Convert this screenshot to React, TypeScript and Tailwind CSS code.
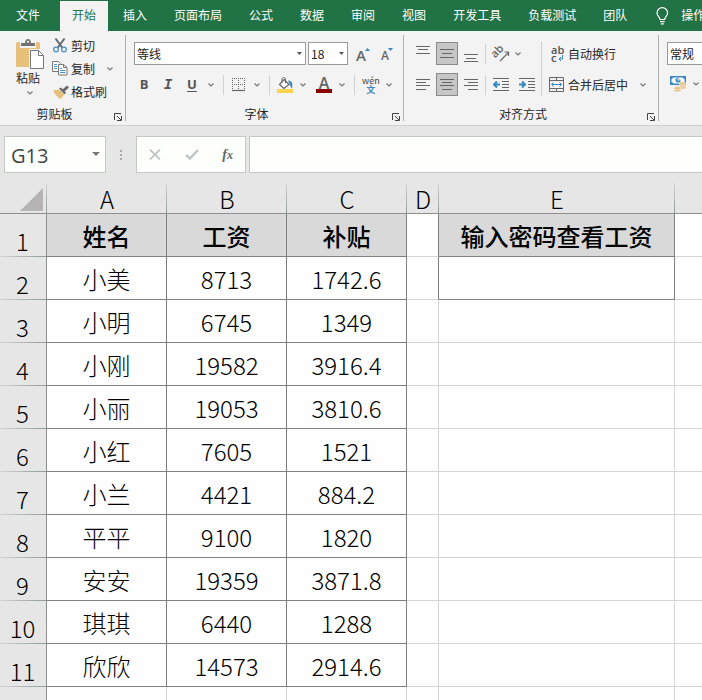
import React from 'react';
import clsx from 'clsx';

const tabs = ['插入', '页面布局', '公式', '数据', '审阅', '视图', '开发工具', '负载测试', '团队'];

const people = [
  { name: '小美', salary: '8713', bonus: '1742.6' },
  { name: '小明', salary: '6745', bonus: '1349' },
  { name: '小刚', salary: '19582', bonus: '3916.4' },
  { name: '小丽', salary: '19053', bonus: '3810.6' },
  { name: '小红', salary: '7605', bonus: '1521' },
  { name: '小兰', salary: '4421', bonus: '884.2' },
  { name: '平平', salary: '9100', bonus: '1820' },
  { name: '安安', salary: '19359', bonus: '3871.8' },
  { name: '琪琪', salary: '6440', bonus: '1288' },
  { name: '欣欣', salary: '14573', bonus: '2914.6' },
];

const rows = [
  ['姓名', '工资', '补贴', '', '输入密码查看工资', ''],
  ...people.map((p) => [p.name, p.salary, p.bonus, '', '', '']),
  ['', '', '', '', '', ''],
];

function Chevron({ className }: { className?: string }) {
  return (
    <svg className={clsx('shrink-0', className)} width="6" height="4" viewBox="0 0 6 4" fill="none" stroke="#777" strokeWidth="1.2">
      <path d="M.5.5 3 3 5.5.5" />
    </svg>
  );
}

function Launcher() {
  return (
    <button aria-label="更多选项" className="absolute right-[3px] bottom-0">
      <svg width="8" height="8" viewBox="0 0 8 8" fill="none" stroke="#444">
        <path d="M.5 7V.5H7M3 3l4 4M7.500 3v4.500H3" />
      </svg>
    </button>
  );
}

function Divider({ className }: { className?: string }) {
  return <div className={clsx('w-px shrink-0 bg-[#d0d0d0]', className)} />;
}

function Group({ label, className, children }: { label: string; className?: string; children: React.ReactNode }) {
  return (
    <section className={clsx('relative flex shrink-0 flex-col justify-between border-r border-[#b0b0b0] pt-[7px]', className)}>
      {children}
      <div className="pr-4 pb-px text-center leading-3">{label}</div>
      <Launcher />
    </section>
  );
}

// three or four horizontal strokes, each given as [x1, x2, y]
function Lines({ lines }: { lines: number[][] }) {
  return (
    <svg width="22" height="22" viewBox="0 0 22 22" className="shrink-0" stroke="#666">
      {lines.map(([x1, x2, y], i) => (
        <path key={i} d={`M${x1} ${y}.5H${x2}`} />
      ))}
    </svg>
  );
}

function LinesButton({ label, lines, active }: { label: string; lines: number[][]; active?: boolean }) {
  return (
    <button
      aria-label={label}
      className={clsx('flex h-[23px] w-[22px] items-center justify-center', active && 'border border-[#8a8a8a] bg-[#c6c6c6]')}
    >
      <Lines lines={lines} />
    </button>
  );
}

function DropSelect({ label, value, className }: { label: string; value: string; className: string }) {
  return (
    <div className={clsx('relative shrink-0', className)}>
      <select aria-label={label} className="h-[23px] w-full appearance-none border border-[#999] bg-white px-[2px] text-xs text-[#222]">
        <option>{value}</option>
      </select>
      <svg className="pointer-events-none absolute top-[10px] right-[4px]" width="5" height="3" viewBox="0 0 5 3">
        <path d="M0 0h5L2.5 3z" fill="#555" />
      </svg>
    </div>
  );
}

function PasteIcon() {
  return (
    <svg width="28" height="30" viewBox="0 0 28 30">
      <rect y="3" width="24" height="25" rx="1.5" fill="#e8c07c" />
      <path d="M4 2.500h4.500a3.500 3.500 0 0 1 7 0H20V9H4z" fill="#f3f3f3" />
      <path d="M5 4h4c0-2 1-4 3-4s3 2 3 4h4v3H5z" fill="#737373" />
      <circle cx="12" cy="2.800" r="1.100" fill="#f3f3f3" />
      <path d="M13 10h11l4 5v15H13z" fill="#f3f3f3" />
      <path d="M14.500 11.500h8l5 5v13h-13z" fill="#fff" stroke="#777" />
      <path d="M22.500 11.500v5h5" fill="none" stroke="#777" />
    </svg>
  );
}

function CutIcon() {
  return (
    <svg width="14" height="15" viewBox="0 0 14 15" fill="none">
      <path d="M2.500.5 9.500 10M11.500.5 4.500 10" stroke="#6a6a6a" strokeWidth="2" />
      <circle cx="3" cy="11.500" r="2.400" stroke="#4a93c6" strokeWidth="1.200" />
      <circle cx="11" cy="11.500" r="2.400" stroke="#4a93c6" strokeWidth="1.200" />
    </svg>
  );
}

function CopyIcon() {
  return (
    <svg width="16" height="15" viewBox="0 0 16 15" fill="#fff" stroke="#777">
      <path d="M.5.5h6l2 2v8h-8z" />
      <path d="M2 3.500h3M2 5.500h3M2 7.500h3" stroke="#4a93c6" />
      <path d="M6.500 3.500h5l3.500 3v7.500H6.500z" />
      <path d="M11.500 3.500v3H15" fill="none" />
      <path d="M8 7.500h2M8 9.500h5.500M8 11.500h5.500" stroke="#4a93c6" />
    </svg>
  );
}

function BrushIcon() {
  return (
    <svg width="16" height="14" viewBox="0 0 16 14">
      <path d="M0 5.500 6 4.500l5 5L8 14C5 13 2 10 0 5.500z" fill="#e8c07c" />
      <path d="m6 3.500 2-1 5 5-1.500 2z" fill="#6a6a6a" />
      <path d="m9.500 4.500 4.500-4 2 2-4.500 4z" fill="#6a6a6a" />
    </svg>
  );
}

function BordersIcon() {
  return (
    <svg width="14" height="14" viewBox="0 0 14 14" fill="none" stroke="#666">
      <path d="M0 .5h13M0 6.500h13M.5 0v12M6.500 0v12M12.500 0v12" strokeDasharray="1 1" />
      <path d="M0 12.500h13" strokeWidth="1.200" />
    </svg>
  );
}

function FillIcon() {
  return (
    <svg width="16" height="16" viewBox="0 0 16 16" fill="none">
      <path d="M7 2.500 12 7.500 7 11.500 2.500 7.500z" fill="#fff" stroke="#666" strokeWidth="1.200" />
      <path d="M5 6V2c0-2 3.500-2 3.500 0v4" stroke="#666" />
      <path d="M11 3.500c4 0 5 3 4 8-1.500-1-1.800-4-4-8z" fill="#3d87bf" />
      <rect y="12" width="16" height="4" fill="#fcd34d" />
    </svg>
  );
}

function OrientationIcon() {
  return (
    <svg width="16" height="16" viewBox="0 0 16 16" fill="none" stroke="#666" className="overflow-visible">
      <text x="0" y="10" transform="rotate(-45 4 9)" fontSize="11" fontWeight="600" fontFamily="Open Sans, sans-serif" fill="#666" stroke="none">ab</text>
      <path d="M7 15 15 7M11.500 6H15.500V10" strokeWidth="1.200" />
    </svg>
  );
}

function IndentIcon({ right }: { right?: boolean }) {
  return (
    <svg width="16" height="14" viewBox="0 0 16 14" fill="none">
      <path d="M0 .5h16M9 3.500h7M9 6.500h7M9 9.500h7M0 12.500h16" stroke="#666" />
      {right ? (
        <path d="M0 6.500h5.500M3 3.500l3 3-3 3" stroke="#3d87bf" strokeWidth="2" />
      ) : (
        <path d="M7 6.500H1.500M4 3.500l-3 3 3 3" stroke="#3d87bf" strokeWidth="2" />
      )}
    </svg>
  );
}

function WrapIcon() {
  return (
    <span className="relative flex w-3 flex-col font-['Open_Sans',sans-serif] text-[11px] leading-[8px] font-semibold text-[#555]">
      <span>ab</span>
      <span className="text-left">c</span>
      <svg className="absolute right-0 bottom-0" width="5" height="7" viewBox="0 0 5 7" fill="none" stroke="#3d87bf">
        <path d="M4.500 0v4H1M3 2 1 4l2 2" />
      </svg>
    </span>
  );
}

function MergeIcon() {
  return (
    <svg width="15" height="15" viewBox="0 0 15 15" fill="none" stroke="#666">
      <path d="M.5.5h14v14H.5zM.5 3.500h14M.5 11.500h14M7.500.5v3M7.500 11.500v3" />
      <path d="M2.500 7.500h10M4.500 5.500l-2 2 2 2M10.500 5.500l2 2-2 2" stroke="#3d87bf" />
    </svg>
  );
}

function CurrencyIcon() {
  return (
    <svg width="16" height="16" viewBox="0 0 16 16">
      <path d="M0 0h16v9H0z" fill="#3d87bf" />
      <path d="M1.500 3.500 3.500 1.500h9l2 2v2l-2 2h-9l-2-2z" fill="#fff" />
      <path d="M5.500 3 8 1.800 10.500 4v2.500H7L5.500 5z" fill="#3d87bf" />
      <circle cx="8.500" cy="3.800" r="1" fill="#fff" />
      <g fill="#e8c07c" stroke="#f3f3f3" strokeWidth=".6">
        <ellipse cx="12.500" cy="11.500" rx="3.500" ry="1.600" />
        <ellipse cx="12.500" cy="9.500" rx="3.500" ry="1.600" />
        <ellipse cx="12.500" cy="7.500" rx="3.500" ry="1.600" />
        <ellipse cx="7.500" cy="14.200" rx="3.500" ry="1.600" />
        <ellipse cx="7.500" cy="12.200" rx="3.500" ry="1.600" />
      </g>
    </svg>
  );
}

function TabBar() {
  return (
    <nav className="flex h-[31px] shrink-0 gap-[3px] overflow-hidden bg-[#217346] pt-px leading-6 whitespace-nowrap text-white">
      <button className="mr-px px-4 pb-[2px]">文件</button>
      <button className="bg-[#f3f3f3] px-3 pb-[2px] text-[#217346]">开始</button>
      {tabs.map((tab) => (
        <button key={tab} className="px-3 pb-[2px]">{tab}</button>
      ))}
      <button className="flex items-center gap-3 pb-[2px] pl-[14px]">
        <svg className="mt-px" width="13" height="18" viewBox="0 0 13 18" fill="none" stroke="#fff" strokeWidth="1.200">
          <path d="M4 12.500c0-2.500-3-3.500-3-6.500a5.300 5.300 0 0 1 10.600 0c0 3-3 4-3 6.500zM4 14.700h4.600M4.800 16.800h3" />
        </svg>
        操作说明
      </button>
    </nav>
  );
}

function Ribbon() {
  return (
    <div className="flex h-[95px] shrink-0 overflow-hidden border-b border-[#cfcfcf] bg-[#f3f3f3] py-1 whitespace-nowrap text-[#262626]">
      <Group label="剪贴板" className="w-[126px]">
        <div className="flex gap-[9px] pl-4">
          <button className="-mt-[3px] flex flex-col items-start">
            <PasteIcon />
            <span className="leading-[18px]">粘贴</span>
            <Chevron className="mt-1 ml-[11px]" />
          </button>
          <div className="-mt-2 flex flex-col">
            <button className="flex h-[23px] items-center gap-1"><CutIcon />剪切</button>
            <button className="flex h-[23px] items-center gap-1">
              <span className="-ml-px"><CopyIcon /></span>
              <span className="-ml-px">复制</span>
              <Chevron className="ml-2" />
            </button>
            <button className="flex h-[23px] items-center gap-[2px]"><BrushIcon />格式刷</button>
          </div>
        </div>
      </Group>

      <Group label="字体" className="w-[278px]">
        <div className="flex flex-col gap-2 pl-2">
          <div className="flex items-center">
            <DropSelect label="字体" value="等线" className="w-[172px]" />
            <DropSelect label="字号" value="18" className="ml-[2px] w-[40px]" />
            <button aria-label="增大字号" className="ml-2 flex h-4 items-end font-['Open_Sans',sans-serif] text-[15px] leading-[14px] font-semibold text-[#666]">
              A
              <svg className="mb-[11px] -ml-px" width="5" height="3" viewBox="0 0 5 3"><path d="M0 3h5L2.500 0z" fill="#3d87bf" /></svg>
            </button>
            <button aria-label="减小字号" className="ml-[11px] flex h-4 items-end font-['Open_Sans',sans-serif] text-xs leading-3 font-semibold text-[#666]">
              A
              <svg className="mb-[11px] -ml-px" width="5" height="3" viewBox="0 0 5 3"><path d="M0 0h5L2.500 3z" fill="#3d87bf" /></svg>
            </button>
          </div>
          <div className="flex h-[23px] items-center font-['Open_Sans','Noto_Sans_CJK_SC',sans-serif] text-[13px] text-[#555]">
            <button className="w-5 font-bold">B</button>
            <button className="ml-1 w-5 font-['Liberation_Mono',monospace] text-sm font-bold italic">I</button>
            <button className="ml-1 w-5 font-bold underline underline-offset-2">U</button>
            <Chevron className="ml-[6px]" />
            <Divider className="ml-[9px] h-5" />
            <button aria-label="边框" className="ml-2 flex items-center gap-2"><BordersIcon /><Chevron /></button>
            <Divider className="ml-[9px] h-5" />
            <button aria-label="填充颜色" className="ml-[7px] flex items-center gap-[7px]"><FillIcon /><Chevron /></button>
            <button aria-label="字体颜色" className="ml-[10px] flex items-center gap-[7px]">
              <span className="flex h-4 w-4 items-end justify-center border-b-4 border-[#8b0000] text-base leading-[12px] font-semibold text-[#666]">A</span>
              <Chevron />
            </button>
            <Divider className="ml-[9px] h-5" />
            <button className="ml-[7px] flex items-center gap-[6px]">
              <span className="flex flex-col items-center font-['Noto_Sans_CJK_SC',sans-serif] text-[9px] leading-[9px]">
                <span className="text-[#444]">wén</span>
                <span className="font-bold text-[#3d87bf]">文</span>
              </span>
              <Chevron />
            </button>
          </div>
        </div>
      </Group>

      <Group label="对齐方式" className="w-[255px]">
        <div className="flex pl-2">
          <div className="flex flex-col gap-2">
            <div className="flex items-center gap-[2px]">
              <LinesButton label="顶端对齐" lines={[[4, 18, 3], [6, 16, 6], [4, 18, 10]]} />
              <LinesButton label="垂直居中" active lines={[[4, 18, 6], [6, 16, 10], [4, 18, 14]]} />
              <LinesButton label="底端对齐" lines={[[4, 18, 11], [6, 16, 15], [4, 18, 18]]} />
              <Divider className="mx-px h-5" />
              <button aria-label="方向" className="ml-1 flex items-center gap-[6px]"><OrientationIcon /><Chevron /></button>
            </div>
            <div className="flex items-center gap-[2px]">
              <LinesButton label="左对齐" lines={[[4, 18, 5], [4, 14, 8], [4, 18, 11], [4, 14, 15]]} />
              <LinesButton label="居中" active lines={[[4, 18, 5], [6, 16, 8], [4, 18, 11], [6, 16, 15]]} />
              <LinesButton label="右对齐" lines={[[4, 18, 5], [8, 18, 8], [4, 18, 11], [8, 18, 15]]} />
              <Divider className="mx-px h-5" />
              <button aria-label="减少缩进量" className="ml-1"><IndentIcon /></button>
              <button aria-label="增加缩进量" className="ml-2"><IndentIcon right /></button>
            </div>
          </div>
          <Divider className="ml-[6px] h-[54px]" />
          <div className="ml-[7px] flex flex-col gap-2">
            <button className="flex h-[23px] items-center gap-[5px] pl-[2px]"><WrapIcon />自动换行</button>
            <button className="flex h-[23px] items-center gap-1">
              <MergeIcon />合并后居中<Chevron className="ml-2" />
            </button>
          </div>
        </div>
      </Group>

      <div className="flex shrink-0 flex-col gap-2 pt-[7px] pl-2">
        <DropSelect label="数字格式" value="常规" className="w-[110px]" />
        <button aria-label="会计数字格式" className="flex h-[21px] items-center gap-[7px] pl-[3px]"><CurrencyIcon /><Chevron /></button>
      </div>
    </div>
  );
}

function FormulaBar() {
  return (
    <div className="flex h-[57px] shrink-0 py-[10px] pl-1">
      <div className="relative w-[102px] shrink-0">
        <input
          aria-label="名称框"
          defaultValue="G13"
          className="h-full w-full border border-[#c6c6c6] bg-[#fdfffc] px-[6px] pt-px font-['Open_Sans',sans-serif] text-xl text-[#444]"
        />
        <svg className="pointer-events-none absolute top-4 right-[6px]" width="8" height="4" viewBox="0 0 8 4">
          <path d="M0 0h8L4 4z" fill="#777" />
        </svg>
      </div>
      <div className="flex w-[30px] shrink-0 flex-col items-center justify-center gap-[2px]">
        <span className="h-[2px] w-[2px] bg-[#aaa]" />
        <span className="h-[2px] w-[2px] bg-[#aaa]" />
        <span className="h-[2px] w-[2px] bg-[#aaa]" />
      </div>
      <div className="flex w-[110px] shrink-0 items-center justify-between border border-[#c6c6c6] bg-[#fdfffc] px-3">
        <button aria-label="取消">
          <svg width="12" height="11" viewBox="0 0 12 11" stroke="#c0c5c5" strokeWidth="1.800"><path d="m1 .5 10 10M11 .5l-10 10" /></svg>
        </button>
        <button aria-label="输入">
          <svg width="14" height="11" viewBox="0 0 14 11" fill="none" stroke="#c0c5c5" strokeWidth="2.400"><path d="m1 6 4 3.500L13 1" /></svg>
        </button>
        <button className="font-['Liberation_Serif',serif] text-sm leading-5 font-bold text-[#666] italic">f<span className="text-xs">x</span></button>
      </div>
      <input aria-label="编辑栏" className="ml-[3px] min-w-0 flex-1 border border-r-0 border-[#c6c6c6] bg-[#fdfffc] px-2 text-xl" />
    </div>
  );
}

function Sheet() {
  return (
    <table className="w-full table-fixed border-separate border-spacing-0 text-center text-2xl leading-6 font-light text-black">
      <colgroup>
        <col className="w-[47px]" />
        <col className="w-[120px]" />
        <col className="w-[120px]" />
        <col className="w-[120px]" />
        <col className="w-[32px]" />
        <col className="w-[236px]" />
        <col />
      </colgroup>
      <thead>
        <tr>
          <th className="h-[31px] border-b border-[#8f8f8f] bg-[linear-gradient(to_bottom,#d4d4d4,#8f9a94)] bg-[length:1px_100%] bg-right bg-no-repeat p-0">
            <svg className="mt-[2px] ml-[20px]" width="23" height="23" viewBox="0 0 23 23"><path d="M23 0v23H0z" fill="#b5b3b4" /></svg>
          </th>
          {['A', 'B', 'C', 'D', 'E', ''].map((col, i) => (
            <th
              key={i}
              className={clsx(
                'h-[31px] border-b border-[#8f8f8f] p-0 pt-px font-light',
                col && 'bg-[linear-gradient(to_bottom,#d4d4d4,#8f9a94)] bg-[length:1px_100%] bg-right bg-no-repeat'
              )}
            >
              {col}
            </th>
          ))}
        </tr>
      </thead>
      <tbody>
        {rows.map((cells, r) => (
          <tr key={r}>
            <th className="h-[43px] border-r border-[#8f8f8f] bg-[linear-gradient(to_right,#d4d4d4,#8f9a94)] bg-[length:100%_1px] bg-bottom bg-no-repeat p-0 pt-[11px] pr-px font-light">
              {r < 11 && r + 1}
            </th>
            {cells.map((text, c) => {
              const boxed = (c < 3 && r < 11) || (c === 4 && r < 2);
              const darkRight = boxed || (c === 3 && r < 2);
              return (
                <td
                  key={c}
                  className={clsx(
                    'h-[43px] border-b p-0 pt-px whitespace-nowrap',
                    c < 5 && 'border-r',
                    darkRight ? 'border-r-[#808080]' : 'border-r-[#d4d4d4]',
                    boxed ? 'border-b-[#808080]' : 'border-b-[#d4d4d4]',
                    r === 0 && boxed ? 'bg-[#d9d9d9] font-medium' : 'bg-[#fefefe]'
                  )}
                >
                  {text}
                </td>
              );
            })}
          </tr>
        ))}
      </tbody>
    </table>
  );
}

export default function App() {
  return (
    <div className="flex h-screen flex-col overflow-hidden bg-[#e6e6e6] font-['Noto_Sans_CJK_SC',sans-serif] text-xs">
      <TabBar />
      <Ribbon />
      <FormulaBar />
      <Sheet />
    </div>
  );
}
